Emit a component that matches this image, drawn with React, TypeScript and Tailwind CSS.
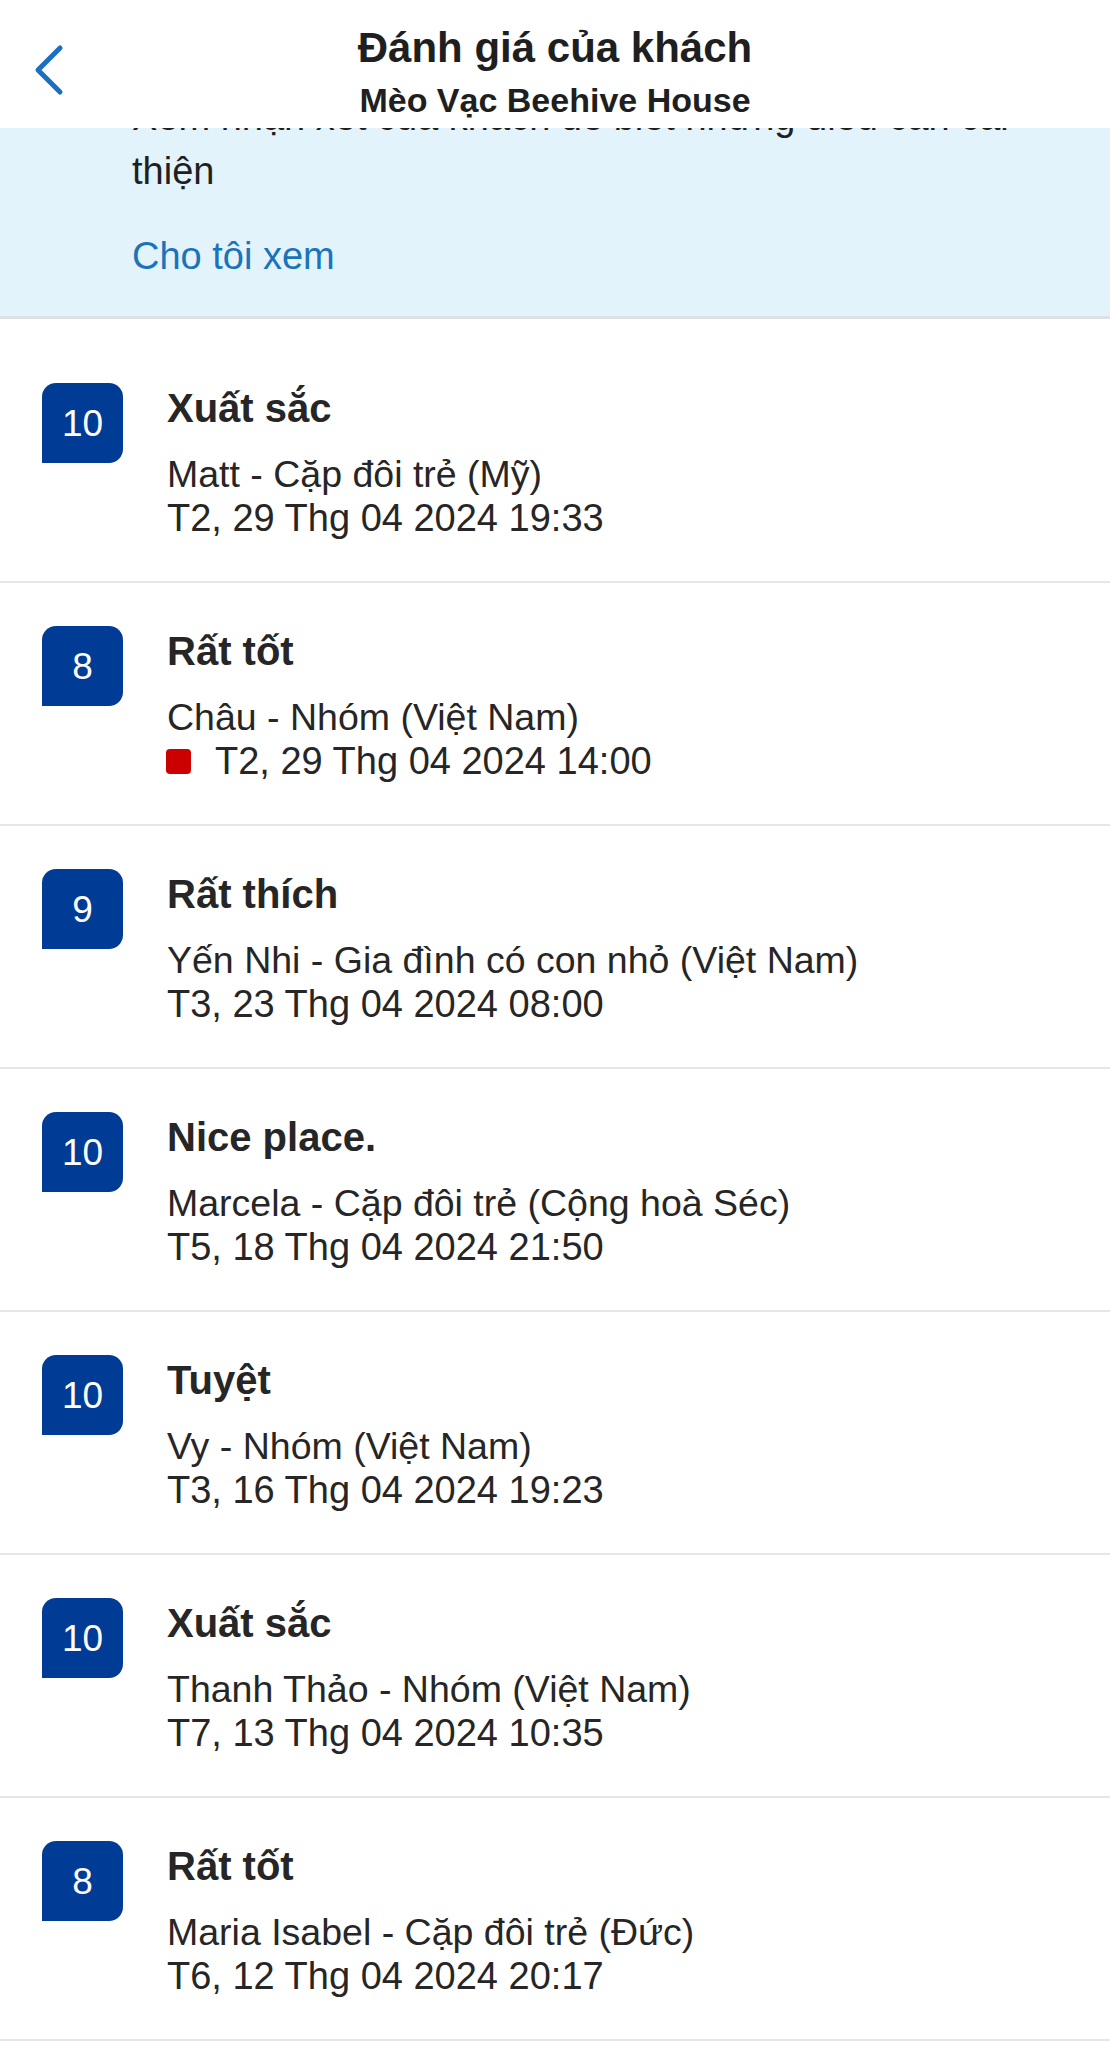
import React from "react";

type Review = {
  score: string;
  title: string;
  guest: string;
  date: string;
  flag?: boolean;
};

const reviews: Review[] = [
  { score: "10", title: "Xuất sắc", guest: "Matt - Cặp đôi trẻ (Mỹ)", date: "T2, 29 Thg 04 2024 19:33" },
  { score: "8", title: "Rất tốt", guest: "Châu - Nhóm (Việt Nam)", date: "T2, 29 Thg 04 2024 14:00", flag: true },
  { score: "9", title: "Rất thích", guest: "Yến Nhi - Gia đình có con nhỏ (Việt Nam)", date: "T3, 23 Thg 04 2024 08:00" },
  { score: "10", title: "Nice place.", guest: "Marcela - Cặp đôi trẻ (Cộng hoà Séc)", date: "T5, 18 Thg 04 2024 21:50" },
  { score: "10", title: "Tuyệt", guest: "Vy - Nhóm (Việt Nam)", date: "T3, 16 Thg 04 2024 19:23" },
  { score: "10", title: "Xuất sắc", guest: "Thanh Thảo - Nhóm (Việt Nam)", date: "T7, 13 Thg 04 2024 10:35" },
  { score: "8", title: "Rất tốt", guest: "Maria Isabel - Cặp đôi trẻ (Đức)", date: "T6, 12 Thg 04 2024 20:17" },
];

function Row({ r, first }: { r: Review; first: boolean }) {
  return (
    <div
      className={`flex border-b-2 border-[#e6e6e6] pl-[42px] pb-[41px] ${first ? "pt-[64px]" : "pt-[43px]"}`}
    >
      <div className="flex h-[80px] w-[81px] shrink-0 items-center justify-center rounded-tl-[14px] rounded-tr-[14px] rounded-br-[14px] bg-[#003b95] text-[37px] leading-none text-white">
        {r.score}
      </div>
      <div className="ml-[44px] flex flex-col">
        <div className="mt-[1px] text-[40px] font-bold leading-[48px] text-[#262626]">{r.title}</div>
        <div className="mt-[20px] text-[37.5px] leading-[44px] text-[#262626]">{r.guest}</div>
        <div className="flex items-center text-[38px] leading-[44px] text-[#262626]">
          {r.flag && <span className="mr-[24px] ml-[-1px] inline-block h-[25px] w-[25px] rounded-[4px] bg-[#cc0000]" />}
          <span>{r.date}</span>
        </div>
      </div>
    </div>
  );
}

export default function App() {
  return (
    <div
      className="w-[1110px] bg-white"
      style={{ fontFamily: '"Liberation Sans", Arial, sans-serif' }}
    >
      <header className="relative z-10 flex h-[128px] flex-col items-center bg-white pt-[25px]">
        <svg
          className="absolute left-[30px] top-[42px]"
          width="40"
          height="56"
          viewBox="0 0 40 56"
          fill="none"
        >
          <polyline
            points="30,6 8,28 30,50"
            stroke="#1b6fc2"
            strokeWidth="5"
            strokeLinecap="round"
            strokeLinejoin="round"
          />
        </svg>
        <div className="text-[42px] font-bold leading-[46px] text-[#1f1f1f]">Đánh giá của khách</div>
        <div className="mt-[10px] text-[34px] font-bold leading-[38px] text-[#1f1f1f]">Mèo Vạc Beehive House</div>
      </header>

      <section className="relative mt-[-38px] border-b-[3px] border-[#dde1e3] bg-[#e3f3fc] pb-[33px] pl-[132px] pr-[40px]">
        <p className="text-[38px] leading-[54px] text-[#1f1f1f]">
          Xem nhận xét của khách để biết những điều cần cải
          <br />
          thiện
        </p>
        <div className="mt-[31px] text-[38px] leading-[54px] text-[#1a74bb]">Cho tôi xem</div>
      </section>

      <div className="flex flex-col">
        {reviews.map((r, i) => (
          <Row key={i} r={r} first={i === 0} />
        ))}
      </div>
    </div>
  );
}
